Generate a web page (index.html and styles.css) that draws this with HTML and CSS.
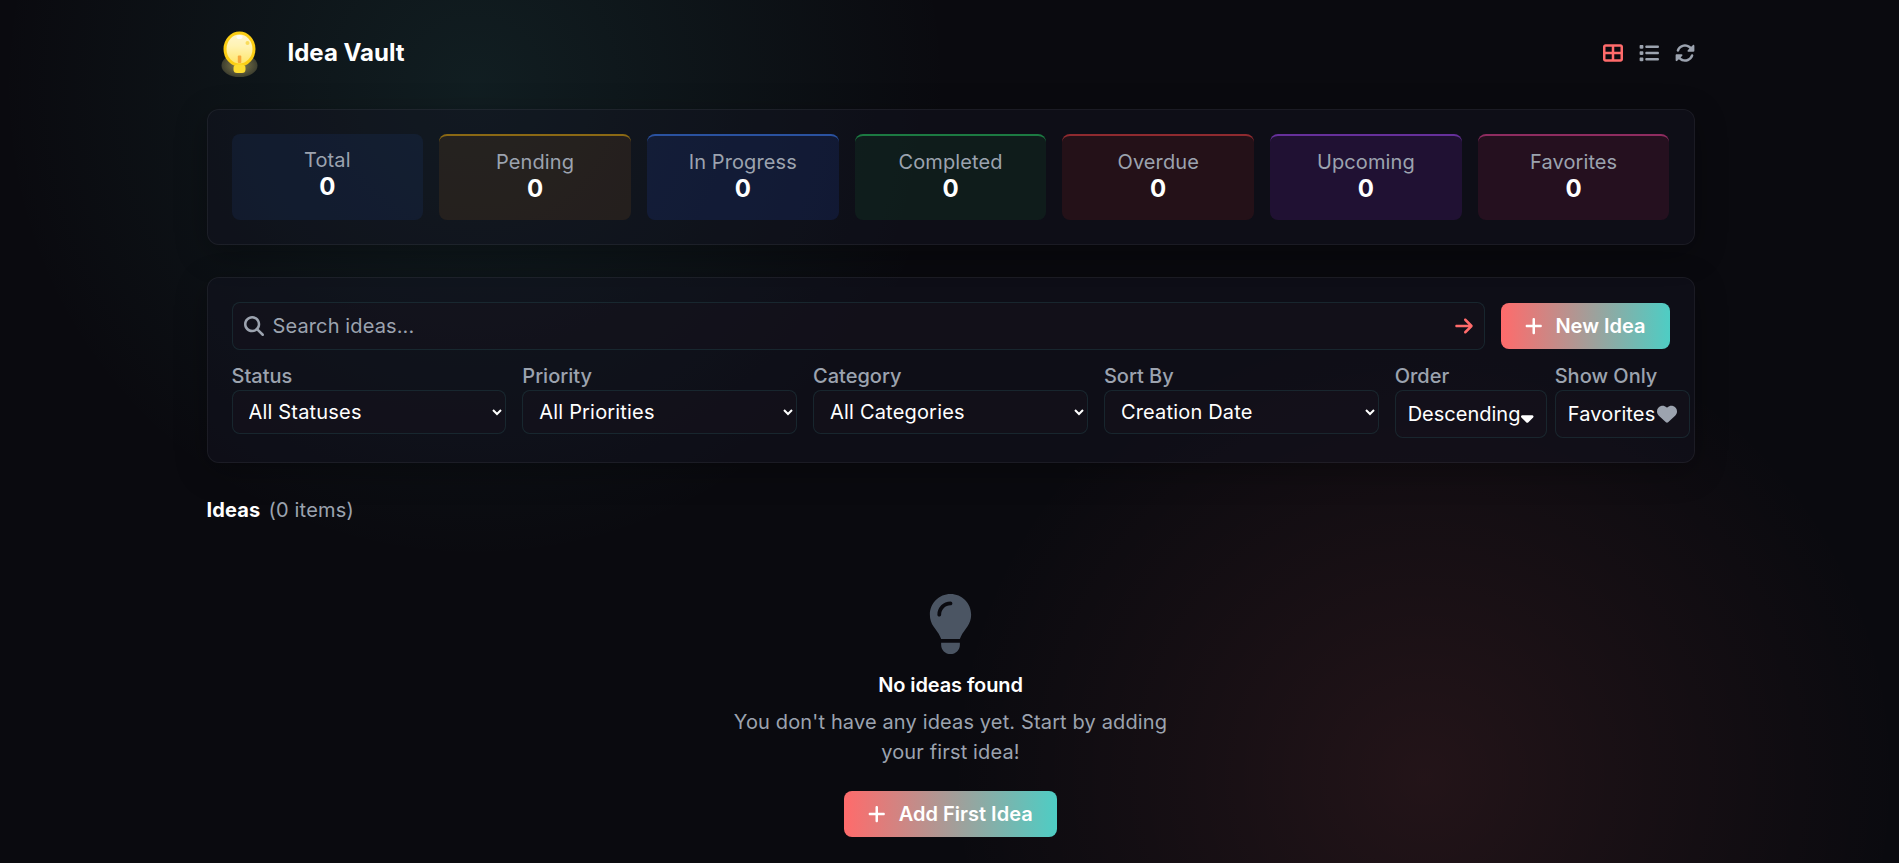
FILE: index.html
```html
<!DOCTYPE html>
<html lang="en">
<head>
<meta charset="utf-8">
<title>Idea Vault</title>
<link rel="stylesheet" href="styles.css">
</head>
<body>
<div class="container">
  <header class="header">
    <div class="brand">
      <svg class="logo" viewBox="0 0 64 64" aria-hidden="true">
        <defs>
          <radialGradient id="glow"><stop offset="0" stop-color="#ffe98a" stop-opacity=".5"/><stop offset="1" stop-color="#ffe98a" stop-opacity=".2"/></radialGradient>
          <linearGradient id="bulb" x1="0" y1="0" x2="0" y2="1"><stop offset="0" stop-color="#fff6cf"/><stop offset=".4" stop-color="#fff3b4"/><stop offset="1" stop-color="#ffe566"/></linearGradient>
        </defs>
        <ellipse cx="32.500" cy="44.500" rx="18" ry="11.500" fill="url(#glow)"/>
        <ellipse cx="32.500" cy="28" rx="14.500" ry="16" fill="url(#bulb)" stroke="#fcce14" stroke-width="3"/>
        <ellipse cx="32.500" cy="16" rx="3" ry="2" fill="#fff" opacity=".8"/>
        <circle cx="40.500" cy="22" r="2" fill="#f9dc5c"/>
        <rect x="30.800" y="34.500" width="3.500" height="7.500" rx="1" fill="#f7a93b"/>
        <rect x="26.500" y="43.500" width="12" height="8.500" rx="3.500" fill="#fddc30"/>
      </svg>
      <h1 class="title">Idea Vault</h1>
    </div>
    <nav class="actions">
      <button class="icon-btn active" aria-label="Grid view"><svg class="icon" viewBox="0 0 512 512"><path d="M448 96V224H288V96H448zm0 192V416H288V288H448zM224 224H64V96H224V224zM64 288H224V416H64V288zM64 32C28.700 32 0 60.700 0 96V416c0 35.300 28.700 64 64 64H448c35.300 0 64-28.700 64-64V96c0-35.300-28.700-64-64-64H64z"/></svg></button>
      <button class="icon-btn" aria-label="List view"><svg class="icon" viewBox="0 0 512 512"><path d="M40 48C26.700 48 16 58.700 16 72v48c0 13.300 10.700 24 24 24H88c13.300 0 24-10.700 24-24V72c0-13.300-10.700-24-24-24H40zM192 64c-17.700 0-32 14.300-32 32s14.300 32 32 32H480c17.700 0 32-14.300 32-32s-14.300-32-32-32H192zm0 160c-17.700 0-32 14.300-32 32s14.300 32 32 32H480c17.700 0 32-14.300 32-32s-14.300-32-32-32H192zm0 160c-17.700 0-32 14.300-32 32s14.300 32 32 32H480c17.700 0 32-14.300 32-32s-14.300-32-32-32H192zM16 232v48c0 13.300 10.700 24 24 24H88c13.300 0 24-10.700 24-24V232c0-13.300-10.700-24-24-24H40c-13.300 0-24 10.700-24 24zM40 368c-13.300 0-24 10.700-24 24v48c0 13.300 10.700 24 24 24H88c13.300 0 24-10.700 24-24V392c0-13.300-10.700-24-24-24H40z"/></svg></button>
      <button class="icon-btn" aria-label="Refresh"><svg class="icon" viewBox="0 0 512 512"><path d="M142.900 142.900c62.200-62.200 162.700-62.500 225.300-1L327 183c-6.900 6.900-8.900 17.200-5.200 26.200s12.500 14.800 22.200 14.800H472c13.300 0 24-10.700 24-24V72c0-9.700-5.800-18.500-14.800-22.200s-19.300-1.700-26.200 5.200L413.400 96.600c-87.600-86.500-228.700-86.200-315.800 1C73.200 122 55.600 150.700 44.800 181.400c-5.900 16.700 2.900 34.900 19.500 40.800s34.900-2.900 40.800-19.500c7.700-21.800 20.200-42.300 37.800-59.800zM16 312V440c0 9.700 5.800 18.500 14.800 22.200s19.300 1.700 26.200-5.200l41.600-41.600c87.600 86.500 228.700 86.200 315.800-1c24.400-24.400 42.100-53.100 52.900-83.700c5.900-16.700-2.900-34.900-19.500-40.800s-34.900 2.900-40.800 19.500c-7.700 21.800-20.200 42.300-37.800 59.800c-62.200 62.200-162.700 62.500-225.300 1L185 329c6.900-6.900 8.900-17.200 5.200-26.200s-12.500-14.800-22.200-14.800H40c-13.300 0-24 10.700-24 24z"/></svg></button>
    </nav>
  </header>

  <section class="panel stats">
    <div class="stat total"><span class="stat-label">Total</span><span class="stat-value">0</span></div>
    <div class="stat pending"><span class="stat-label">Pending</span><span class="stat-value">0</span></div>
    <div class="stat progress"><span class="stat-label">In Progress</span><span class="stat-value">0</span></div>
    <div class="stat completed"><span class="stat-label">Completed</span><span class="stat-value">0</span></div>
    <div class="stat overdue"><span class="stat-label">Overdue</span><span class="stat-value">0</span></div>
    <div class="stat upcoming"><span class="stat-label">Upcoming</span><span class="stat-value">0</span></div>
    <div class="stat favorites"><span class="stat-label">Favorites</span><span class="stat-value">0</span></div>
  </section>

  <section class="panel filters">
    <div class="search-row">
      <div class="search">
        <svg class="icon" viewBox="0 0 512 512"><path d="M416 208c0 45.900-14.900 88.300-40 122.700L502.600 457.400c12.500 12.500 12.500 32.800 0 45.300s-32.800 12.500-45.300 0L330.700 376c-34.400 25.200-76.800 40-122.700 40C93.100 416 0 322.900 0 208S93.100 0 208 0S416 93.100 416 208zM208 352a144 144 0 1 0 0-288 144 144 0 1 0 0 288z"/></svg>
        <input class="search-input" type="text" placeholder="Search ideas...">
        <svg class="icon go" viewBox="0 0 448 512"><path d="M438.600 278.600c12.500-12.500 12.500-32.800 0-45.300l-160-160c-12.500-12.500-32.800-12.500-45.300 0s-12.500 32.800 0 45.300L338.800 224 32 224c-17.700 0-32 14.300-32 32s14.300 32 32 32l306.700 0L233.400 393.400c-12.500 12.500-12.500 32.800 0 45.300s32.800 12.500 45.300 0l160-160z"/></svg>
      </div>
      <button class="primary"><svg class="icon plus" viewBox="0 0 448 512"><path d="M256 80c0-17.700-14.300-32-32-32s-32 14.300-32 32V224H48c-17.700 0-32 14.300-32 32s14.300 32 32 32H192V432c0 17.700 14.300 32 32 32s32-14.300 32-32V288H400c17.700 0 32-14.300 32-32s-14.300-32-32-32H256V80z"/></svg><span>New Idea</span></button>
    </div>
    <div class="filter-row">
      <label class="field"><span class="field-label">Status</span><select class="select"><option>All Statuses</option></select></label>
      <label class="field"><span class="field-label">Priority</span><select class="select"><option>All Priorities</option></select></label>
      <label class="field"><span class="field-label">Category</span><select class="select"><option>All Categories</option></select></label>
      <label class="field"><span class="field-label">Sort By</span><select class="select"><option>Creation Date</option></select></label>
      <div class="toggles">
        <div class="field order"><span class="field-label">Order</span><button class="toggle"><span>Descending</span><svg class="icon sort" viewBox="0 0 320 512"><path d="M182.600 470.600c-12.500 12.500-32.800 12.500-45.300 0l-128-128c-9.200-9.200-11.900-22.900-6.900-34.900s16.600-19.800 29.600-19.800H288c12.900 0 24.600 7.800 29.600 19.800s2.200 25.700-6.900 34.900l-128 128z"/></svg></button></div>
        <div class="field only"><span class="field-label">Show Only</span><button class="toggle"><span>Favorites</span><svg class="icon heart" viewBox="0 0 512 512"><path d="M47.600 300.400L228.300 469.100c7.500 7 17.400 10.900 27.700 10.900s20.200-3.900 27.700-10.900L464.400 300.400c30.400-28.300 47.600-68 47.600-109.500v-5.800c0-69.900-50.500-129.500-119.400-141C347 36.500 300.600 51.400 268 84L256 96 244 84c-32.600-32.600-79-47.500-124.600-39.900C50.500 55.600 0 115.200 0 185.100v5.800c0 41.500 17.200 81.200 47.600 109.500z"/></svg></button></div>
      </div>
    </div>
  </section>

  <div class="list-head"><h2 class="list-title">Ideas</h2><span class="count">(0 items)</span></div>

  <section class="empty">
    <svg class="empty-icon" viewBox="0 0 384 512"><path d="M272 384c9.600-31.900 29.500-59.100 49.200-86.200c5.200-7.100 10.400-14.200 15.400-21.400c19.800-28.500 31.400-63 31.400-100.300C368 78.800 289.200 0 192 0S16 78.800 16 176c0 37.300 11.600 71.900 31.400 100.300c5 7.200 10.200 14.300 15.400 21.400c19.800 27.100 39.700 54.400 49.200 86.200H272zM192 512c44.200 0 80-35.800 80-80V416H112v16c0 44.200 35.800 80 80 80zM112 176c0 8.800-7.200 16-16 16s-16-7.200-16-16c0-61.900 50.100-112 112-112c8.800 0 16 7.200 16 16s-7.200 16-16 16c-44.200 0-80 35.800-80 80z"/></svg>
    <h3 class="empty-title">No ideas found</h3>
    <p class="empty-text">You don't have any ideas yet. Start by adding your first idea!</p>
    <button class="primary"><svg class="icon plus" viewBox="0 0 448 512"><path d="M256 80c0-17.700-14.300-32-32-32s-32 14.300-32 32V224H48c-17.700 0-32 14.300-32 32s14.300 32 32 32H192V432c0 17.700 14.300 32 32 32s32-14.300 32-32V288H400c17.700 0 32-14.300 32-32s-14.300-32-32-32H256V80z"/></svg><span>Add First Idea</span></button>
  </section>
</div>
</body>
</html>
```
FILE: styles.css
```css
* { box-sizing: border-box; margin: 0; padding: 0; }
html { height: 100%; overflow: hidden; }
body {
  height: 100%;
  overflow: hidden;
  color: #fff;
  font: 400 20px/30px Inter, sans-serif;
  background:
    radial-gradient(circle at 25% 10%, rgba(78, 205, 196, .1), transparent 475px),
    radial-gradient(circle at 75% 90%, rgba(255, 107, 107, .1), transparent 475px),
    #0a0a0f;
}
button, input, select { font: inherit; letter-spacing: inherit; color: inherit; }
button { background: none; border: 0; }
.container { width: 1488px; margin: 0 auto 0 206.500px; padding-top: 21px; }
.icon { display: block; flex: none; width: 20px; height: 20px; fill: currentColor; }

.header { display: flex; align-items: center; justify-content: space-between; height: 64px; margin-bottom: 24px; }
.brand { display: flex; align-items: center; gap: 16px; }
.logo { width: 64px; height: 64px; }
.title { font-size: 24px; font-weight: 700; line-height: 32px; padding-left: 1px; }
.actions { display: flex; gap: 16px; color: #9ca3af; }
.icon-btn.active { color: #ff6b6b; }

.panel {
  border: 1px solid rgba(255, 255, 255, .06);
  border-radius: 12px;
  background: rgba(20, 20, 36, .4);
  box-shadow: 0 8px 32px rgba(0, 0, 0, .3);
  padding: 24px;
  margin-bottom: 32px;
}
.stats { display: grid; grid-template-columns: repeat(7, 1fr); gap: 16px; height: 136px; }
.stat { display: flex; flex-direction: column; align-items: center; padding-top: 12px; border-radius: 8px; border-top: 2px solid transparent; }
.stat-label { color: #9ca3af; line-height: 28px; letter-spacing: .1px; }
.stat-value { font-size: 24px; font-weight: 700; line-height: 25px; }
.total { border-top: 0; background: rgba(30, 58, 120, .2); }
.pending { background: rgba(120, 75, 30, .2); border-color: #8b6914; }
.progress { background: rgba(30, 58, 150, .22); border-color: #2a52a0; }
.completed { background: rgba(20, 83, 45, .2); border-color: #1c7a42; }
.overdue { background: rgba(127, 29, 29, .2); border-color: #8f2a2f; }
.upcoming { background: rgba(88, 28, 135, .25); border-color: #66309b; }
.favorites { background: rgba(131, 24, 67, .2); border-color: #8f2c60; }

.filters { height: 186px; }
.search-row { display: flex; align-items: center; gap: 16px; }
.search { flex: 1; display: flex; align-items: center; height: 48px; padding: 0 11px; gap: 9px; color: #9ca3af; }
.search, .select, .toggle { border: 1px solid rgba(78, 205, 196, .12); border-radius: 8px; background-color: rgba(22, 18, 28, .5); }
.search-input { flex: 1; min-width: 0; height: 30px; background: none; border: 0; outline: 0; letter-spacing: .12px; }
.search-input::placeholder { color: #9ca3af; }
.go { color: #ff6b6b; width: 18px; }
.primary { display: flex; align-items: center; height: 46px; padding: 0 24px; gap: 13px; border-radius: 8px; background: linear-gradient(90deg, #ff6b6b, #4ecdc4); font-weight: 600; white-space: nowrap; }
.plus { width: 17.500px; }

.filter-row { display: grid; grid-template-columns: repeat(5, minmax(0, 1fr)); gap: 16px; margin-top: 12px; }
.field { display: flex; flex-direction: column; min-width: 0; }
.field-label { color: #9ca3af; font-weight: 500; line-height: 28px; }
.select { width: 100%; height: 44px; padding: 0 12px; color-scheme: dark; color: #fff; letter-spacing: .18px; }
.toggles { display: flex; gap: 8px; }
.toggles .field { flex: none; }
.order { width: 152px; }
.only { width: 135px; }
.toggle { display: flex; align-items: center; justify-content: space-between; height: 48px; padding: 0 12px; white-space: nowrap; }
.only .toggle { letter-spacing: .15px; }
.sort { width: 12.500px; }
.heart { color: #9ca3af; }

.list-head { display: flex; align-items: center; gap: 8px; height: 30px; }
.list-title { font-size: 20px; font-weight: 700; letter-spacing: .15px; }
.count { color: #9ca3af; letter-spacing: .2px; }

.empty { display: flex; flex-direction: column; align-items: center; padding-top: 69px; text-align: center; }
.empty-icon { width: 45px; height: 60px; fill: #4b5563; }
.empty-title { font-size: 20px; font-weight: 600; line-height: 28px; margin-top: 17px; letter-spacing: -.1px; }
.empty-text { width: 448px; margin: 8px 0 24px; color: #9ca3af; letter-spacing: .14px; }
```
